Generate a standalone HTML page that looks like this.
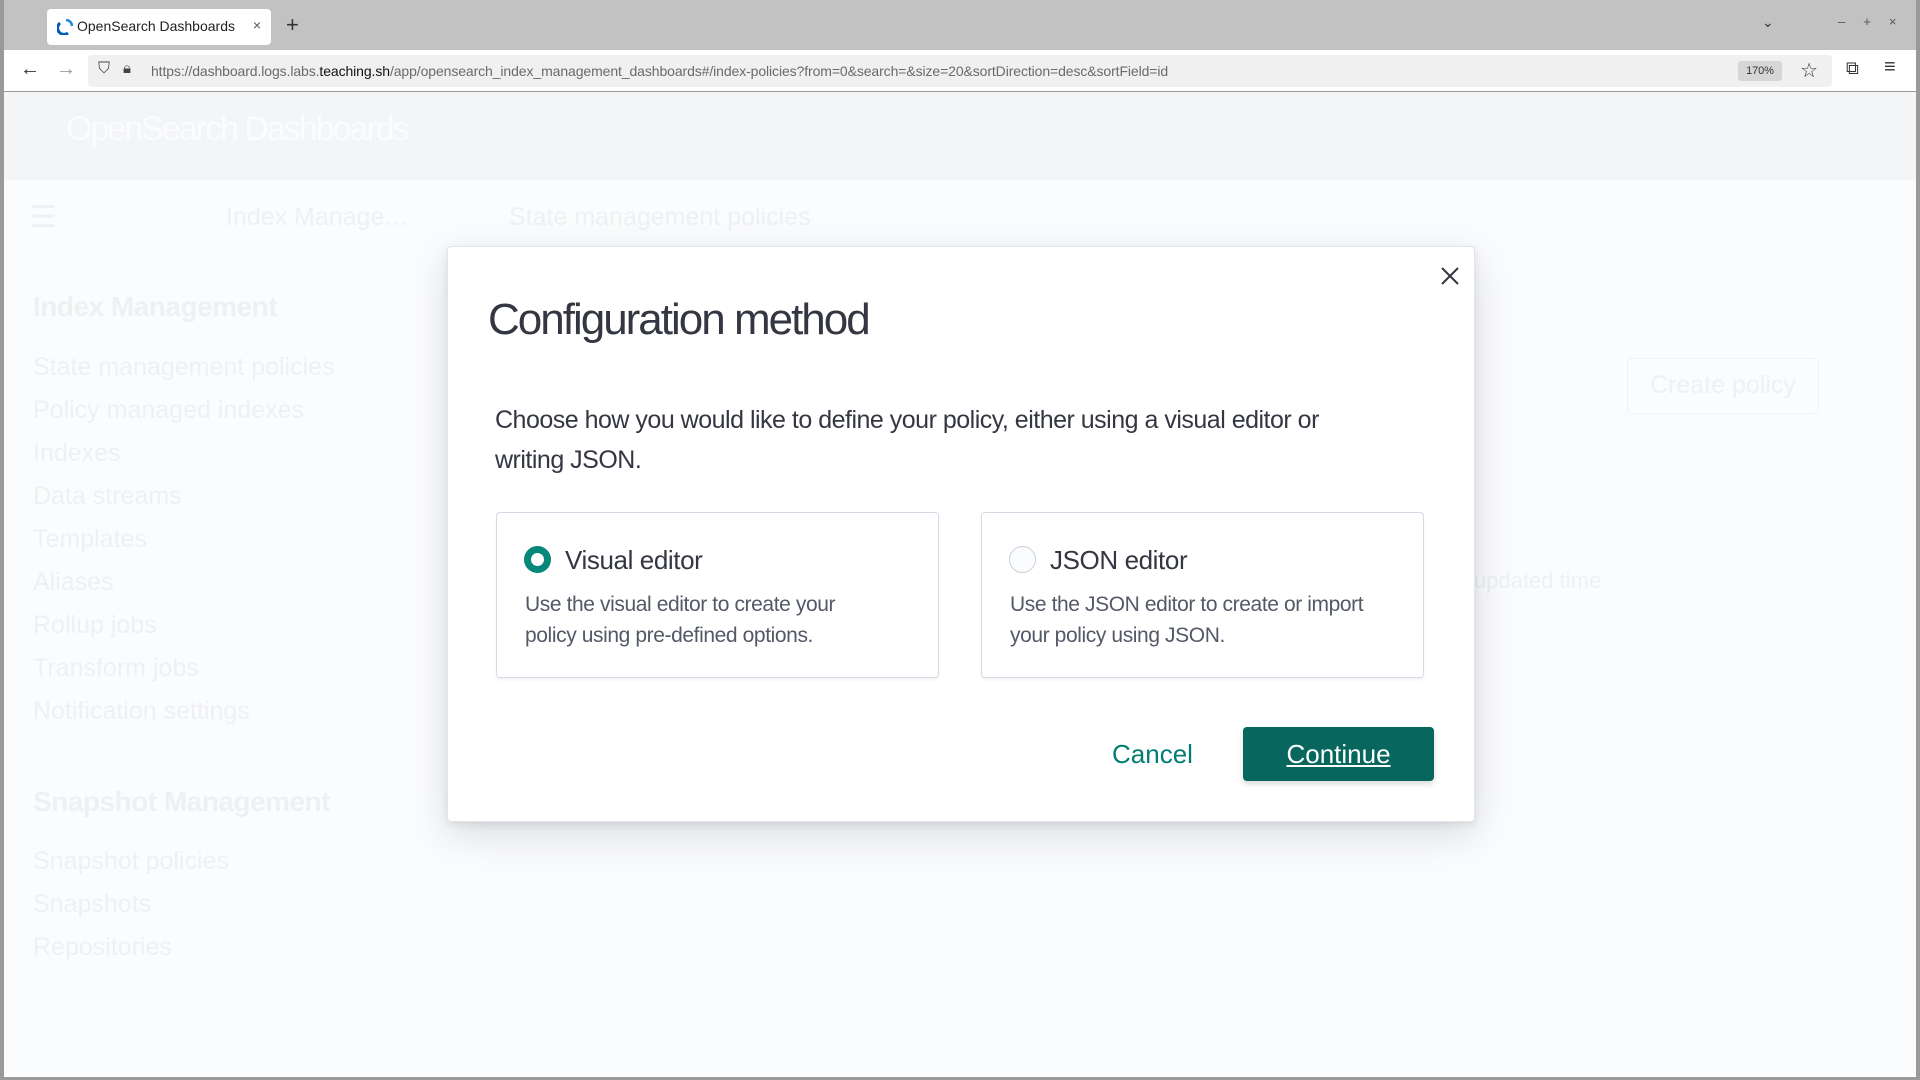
<!DOCTYPE html>
<html><head><meta charset="utf-8"><style>
*{box-sizing:border-box;margin:0;padding:0}
body{width:1920px;height:1080px;overflow:hidden;background:#9a9a9a;font-family:"Liberation Sans",sans-serif;position:relative}
.win{position:absolute;left:4px;top:0;width:1912px;height:1077px;background:#fbfcfd}
.tabbar{position:absolute;left:0;top:0;width:100%;height:50px;background:#c2c2c2}
.tab{position:absolute;left:43px;top:9px;width:224px;height:36px;background:#fff;border-radius:4px;font-size:14px;color:#222;padding:9px 0 0 30px}
.url{position:absolute;left:0;top:50px;width:100%;height:42px;background:#fff;border-bottom:1px solid #999}
.field{position:absolute;left:84px;top:5px;width:1744px;height:32px;background:#f0f0f0;border-radius:4px;font-size:14px;color:#6a6a6a;padding:8px 0 0 63px;letter-spacing:-.1px}
.field b{font-weight:normal;color:#111}
.zoom{position:absolute;right:50px;top:6px;width:44px;height:20px;background:#d6d6d6;border-radius:3px;font-size:11px;color:#333;text-align:center;padding-top:4px}
.hdr{position:absolute;left:0;top:92px;width:100%;height:88px;background:#f4f5f7}
.fade{color:#eef0f2;position:absolute;white-space:nowrap}
.modal{position:absolute;left:443px;top:246px;width:1028px;height:576px;background:#fff;border:1px solid #e2e5ea;border-radius:4px;box-shadow:0 12px 40px rgba(60,70,90,.18),0 3px 8px rgba(0,0,0,.08)}
.title{position:absolute;left:40px;top:48px;font-size:44px;font-weight:300;color:#343741;letter-spacing:-2px}
.p{position:absolute;left:47px;top:153px;font-size:25px;line-height:40px;color:#343741;width:880px;letter-spacing:-.5px}
.card{position:absolute;top:265px;width:443px;height:166px;border:1px solid #d3dae6;border-radius:4px;box-shadow:0 2px 3px rgba(0,0,0,.05)}
.card h3{position:absolute;left:68px;top:32px;font-size:26px;font-weight:normal;color:#343741;letter-spacing:-.4px}
.card p{position:absolute;left:28px;top:76px;font-size:21px;line-height:31px;color:#535966;width:380px;letter-spacing:-.4px}
.radio{position:absolute;left:27px;top:33px;width:27px;height:27px;border-radius:50%}
.btn{position:absolute;left:795px;top:480px;width:191px;height:54px;background:#07675e;border-radius:4px;color:#fff;font-size:26px;text-align:center;padding-top:12px;text-decoration:underline;box-shadow:0 3px 6px rgba(0,0,0,.15)}
.cancel{position:absolute;left:664px;top:492px;color:#017d73;font-size:26px}
</style></head><body>
<div class="win">
<div class="tabbar">
 <div class="tab"><svg style="position:absolute;left:10px;top:10px" width="16" height="16" viewBox="0 0 16 16"><path d="M9 1a6 6 0 0 1 6 6" stroke="#1b8ed6" stroke-width="2.5" fill="none"/><path d="M3 4a5 5 0 0 0 8 10" stroke="#005eb8" stroke-width="3" fill="none"/></svg>OpenSearch Dashboards<span style="position:absolute;right:10px;top:8px;color:#555">×</span></div>
 <div style="position:absolute;left:282px;top:12px;font-size:22px;color:#333">+</div>
 <div style="position:absolute;left:1758px;top:14px;font-size:14px;color:#333">⌄</div>
 <div style="position:absolute;left:1834px;top:14px;font-size:13px;color:#555;letter-spacing:18px">–+×</div>
</div>
<div class="url">
 <div style="position:absolute;left:16px;top:8px;font-size:20px;color:#333">←</div>
 <div style="position:absolute;left:52px;top:8px;font-size:20px;color:#999">→</div>
 <div class="field"><span style="position:absolute;left:10px;top:5px;color:#444;font-size:16px">⛉</span><span style="position:absolute;left:35px;top:5px;color:#444;font-size:15px">🔒︎</span>https://dashboard.logs.labs.<b>teaching.sh</b>/app/opensearch_index_management_dashboards#/index-policies?from=0&amp;search=&amp;size=20&amp;sortDirection=desc&amp;sortField=id<div class="zoom">170%</div><span style="position:absolute;right:14px;top:3px;font-size:20px;color:#333">☆</span></div>
 <div style="position:absolute;left:1842px;top:8px;font-size:18px;color:#333">⧉</div>
 <div style="position:absolute;left:1880px;top:6px;font-size:20px;color:#333">≡</div>
</div>
<div class="hdr"><div class="fade" style="left:62px;top:18px;font-size:34px;color:#fbfcfd;letter-spacing:-2px">OpenSearch Dashboards</div></div>
<div class="fade" style="left:26px;top:200px;font-size:30px">☰</div>
<div class="fade" style="left:222px;top:203px;font-size:25px">Index Manage…</div>
<div class="fade" style="left:505px;top:203px;font-size:25px">State management policies</div>
<div class="fade" style="left:29px;top:291px;font-size:28px;font-weight:bold;letter-spacing:-.5px">Index Management</div>
<div class="fade" style="left:29px;top:346px;font-size:25px;line-height:43px">State management policies<br>Policy managed indexes<br>Indexes<br>Data streams<br>Templates<br>Aliases<br>Rollup jobs<br>Transform jobs<br>Notification settings</div>
<div class="fade" style="left:29px;top:786px;font-size:28px;font-weight:bold;letter-spacing:-.5px">Snapshot Management</div>
<div class="fade" style="left:29px;top:840px;font-size:25px;line-height:43px">Snapshot policies<br>Snapshots<br>Repositories</div>
<div class="fade" style="left:1623px;top:358px;width:192px;height:56px;border:1px solid #f0f2f4;border-radius:4px;font-size:25px;padding:12px 0 0 22px">Create policy</div>
<div class="fade" style="left:1470px;top:568px;font-size:22px">updated time</div>
<div class="modal">
 <svg style="position:absolute;left:991px;top:18px" width="22" height="22" viewBox="0 0 22 22"><path d="M3 3L19 19M19 3L3 19" stroke="#343741" stroke-width="2"/></svg>
 <div class="title">Configuration method</div>
 <div class="p">Choose how you would like to define your policy, either using a visual editor or writing JSON.</div>
 <div class="card" style="left:48px"><div class="radio" style="border:7px solid #07867a;background:#fff"></div><h3>Visual editor</h3><p style="width:340px">Use the visual editor to create your policy using pre-defined options.</p></div>
 <div class="card" style="left:533px"><div class="radio" style="border:1px solid #c9cfd8;background:#fbfcfd"></div><h3>JSON editor</h3><p>Use the JSON editor to create or import your policy using JSON.</p></div>
 <div class="cancel">Cancel</div>
 <div class="btn">Continue</div>
</div>
</div>
</body></html>
